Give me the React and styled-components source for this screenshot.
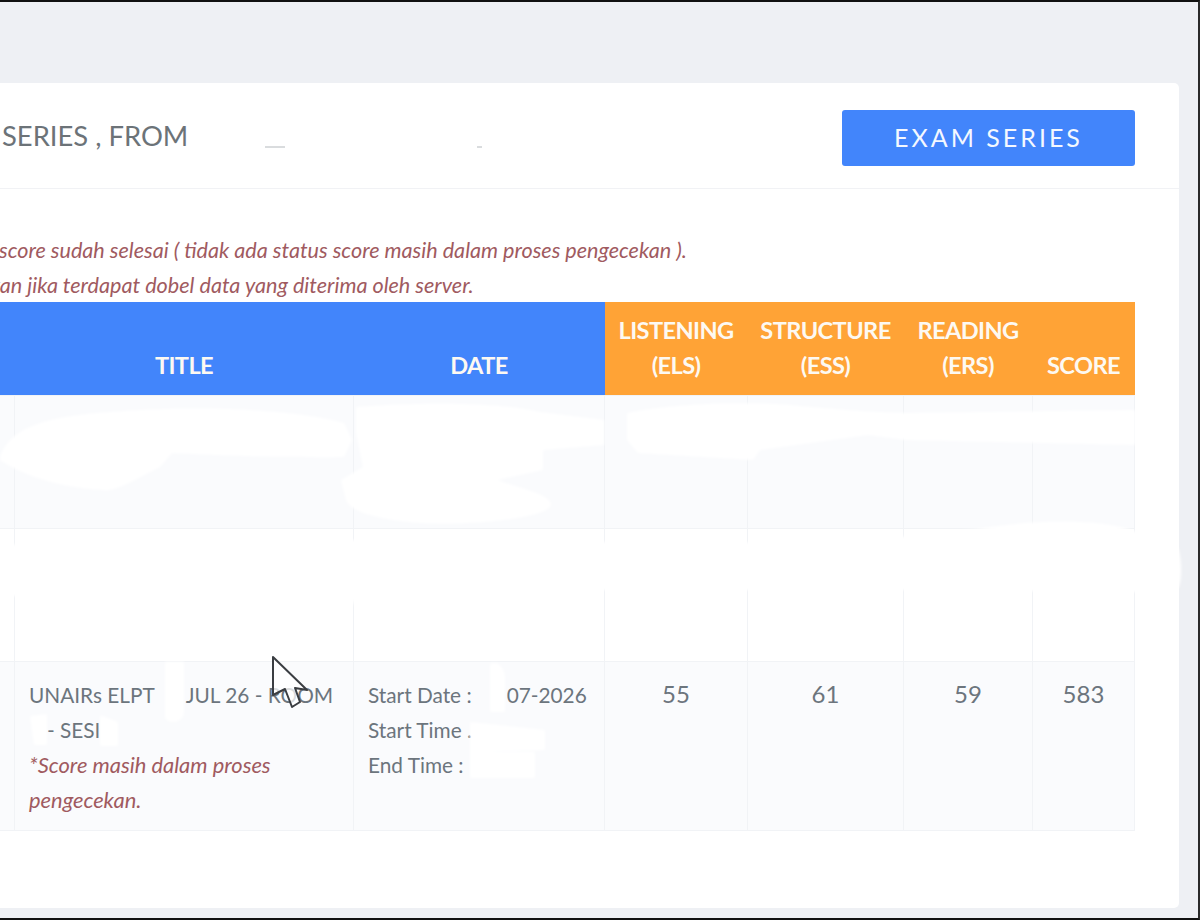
import React from 'react';
import styled, { createGlobalStyle } from 'styled-components';

const GlobalStyle = createGlobalStyle`
  html, body {
    margin: 0;
    padding: 0;
    overflow: hidden;
  }
  body {
    font-family: Lato, "Open Sans", sans-serif;
    background: #000;
  }
`

const Page = styled.div`
  position: relative;
  box-sizing: border-box;
  width: 1200px;
  height: 920px;
  padding-top: 81px;
  border-top: 2px solid #111;
  border-bottom: 2px solid #111;
  border-right: 2px solid #2a2a2a;
  background: #eef0f4;
  overflow: hidden;
`

const Card = styled.div`
  width: 1219px;
  height: 825px;
  margin-left: -40px;
  background: #fff;
  border-radius: 5px;
`

const CardHead = styled.div`
  box-sizing: border-box;
  height: 106px;
  padding: 27px 44px 0 43px;
  display: flex;
  justify-content: space-between;
  align-items: flex-start;
  border-bottom: 1px solid #f1f2f5;
`

const Title = styled.div`
  margin-top: 7px;
  margin-left: -1px;
  font-size: 27.4px;
  line-height: 38px;
  color: #6c7378;
  white-space: nowrap;
`

const ExamButton = styled.button`
  width: 293px;
  height: 56px;
  padding: 0 0 2px;
  border: 0;
  border-radius: 3px;
  background: #4285fb;
  color: #f4f8ff;
  font-family: inherit;
  font-size: 25px;
  letter-spacing: 3px;
  cursor: pointer;
`

const CardBody = styled.div`
  padding: 44px 44px 0 0;
`

const Note = styled.div`
  height: 35px;
  line-height: 35px;
  font-size: 21.6px;
  font-style: italic;
  color: #a05a60;
  white-space: nowrap;
  padding-left: ${props => props.$indent}px;
  &:last-of-type {
    margin-bottom: -1px;
  }
`

const Table = styled.table`
  width: 1174px;
  table-layout: fixed;
  border-collapse: collapse;
`

const Head = styled.th`
  padding: 11px 0 12px;
  vertical-align: bottom;
  background: ${props => props.$color};
  color: #fdf9f2;
  font-size: 23.6px;
  line-height: 35px;
  font-weight: 700;
  letter-spacing: -0.6px;
  text-align: center;
`

const Row = styled.tr`
  height: ${props => props.$height}px;
  background: ${props => (props.$striped ? '#fafbfd' : '#fff')};
`

const Cell = styled.td`
  box-sizing: border-box;
  padding: 15px 14px 13px;
  border: 1px solid #f1f3f6;
  vertical-align: top;
  font-size: 20.8px;
  line-height: 35px;
  color: #6c757d;
`

const Score = styled(Cell)`
  padding-top: 14px;
  text-align: center;
  font-size: 24px;
`

const Line = styled.div`
  white-space: nowrap;
  padding-left: ${props => props.$indent || 0}px;
`

const Gap = styled.span`
  display: inline-block;
  width: ${props => props.$width}px;
`

const Warning = styled.div`
  font-size: 21.9px;
  font-style: italic;
  color: #a05a60;
`

const Overlay = styled.svg`
  position: absolute;
  top: -2px;
  left: 0;
  width: 1200px;
  height: 920px;
  pointer-events: none;
`

const Blobs = styled.g`
  fill: #fff;
  filter: blur(1.5px);
`

const columns = [54, 339, 251, 143, 156, 129, 102];
const blobs = [
  'M185 112 C270 100 420 108 500 118 L484 150 C420 152 300 150 218 149 Z',
  'M0 457 C10 430 38 417 110 412 C200 404 300 410 344 423 L352 440 L344 457 C300 458 230 456 172 453 L160 467 C130 482 115 492 103 490 C70 488 30 480 0 460 Z',
  'M356 407 C420 402 500 402 540 412 L604 420 L604 445 L543 450 L543 470 L497 480 C520 488 552 495 551 505 C548 518 470 526 421 523 C380 520 350 512 346 500 L341 480 L363 467 L356 433 Z',
  'M627 413 C680 402 750 402 791 405 C840 410 870 412 906 413 L1135 410 L1135 445 L906 440 L868 435 L760 450 L753 460 L638 453 L627 440 Z',
  'M0 545 C200 538 400 540 600 542 C800 545 900 540 990 527 C1050 518 1110 520 1136 532 L1178 548 C1182 560 1182 582 1178 588 L1135 592 L905 590 L600 590 L540 628 L370 628 L345 590 L14 596 L0 596 Z',
  'M165 662 L184 662 L184 712 C184 722 170 725 165 718 Z',
  'M30 716 L47 714 L47 745 L34 745 Z',
  'M100 715 L118 722 L118 746 L100 746 Z',
  'M490 664 C498 660 504 668 505 676 L505 712 L490 712 Z',
  'M470 722 L545 730 L545 750 L470 752 Z',
  'M470 752 L535 752 L535 778 L470 778 Z',
];

export default function App() {
  return (
    <Page>
      <GlobalStyle />
      <Card>
        <CardHead>
          <Title>SERIES , FROM</Title>
          <ExamButton>EXAM SERIES</ExamButton>
        </CardHead>
        <CardBody>
          <Note $indent={39}>score sudah selesai ( tidak ada status score masih dalam proses pengecekan ).</Note>
          <Note $indent={30}>kan jika terdapat dobel data yang diterima oleh server.</Note>
          <Table>
            <colgroup>
              {columns.map((w, i) => <col key={i} width={w} />)}
            </colgroup>
            <thead>
              <tr>
                <Head $color="#4285fb" />
                <Head $color="#4285fb">TITLE</Head>
                <Head $color="#4285fb">DATE</Head>
                <Head $color="#ffa336">LISTENING<br />(ELS)</Head>
                <Head $color="#ffa336">STRUCTURE<br />(ESS)</Head>
                <Head $color="#ffa336">READING<br />(ERS)</Head>
                <Head $color="#ffa336">SCORE</Head>
              </tr>
            </thead>
            <tbody>
              <Row $height={133} $striped>
                {columns.map((w, i) => <Cell key={i} />)}
              </Row>
              <Row $height={133}>
                {columns.map((w, i) => <Cell key={i} />)}
              </Row>
              <Row $height={169} $striped>
                <Cell />
                <Cell>
                  <Line>UNAIRs ELPT<Gap $width={31} />JUL 26 - ROOM</Line>
                  <Line $indent={18}>- SESI</Line>
                  <Warning>*Score masih dalam proses pengecekan.</Warning>
                </Cell>
                <Cell>
                  <Line>Start Date :<Gap $width={35} />07-2026</Line>
                  <Line>Start Time .</Line>
                  <Line>End Time :</Line>
                </Cell>
                <Score>55</Score>
                <Score>61</Score>
                <Score>59</Score>
                <Score>583</Score>
              </Row>
            </tbody>
          </Table>
        </CardBody>
      </Card>
      <Overlay viewBox="0 0 1200 920">
        <Blobs>
          {blobs.map((d, i) => <path key={i} d={d} />)}
        </Blobs>
        <path d="M265 147 L285 147 M477 147 L482 147" stroke="#b4b9bd" strokeWidth="1" fill="none" />
        <path d="M273 657 L273 695 L285 689 L292 707 L300 702 L295 688 L307 690 Z" fill="#fff" fillOpacity="0.75" stroke="#3a3d42" strokeWidth="2" strokeLinejoin="round" />
      </Overlay>
    </Page>
  );
}
